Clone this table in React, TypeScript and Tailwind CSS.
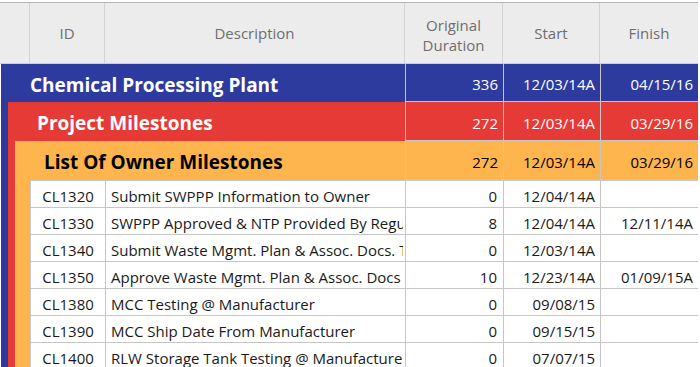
import React from "react";

const FONT = { fontFamily: '"Open Sans", "Noto Sans", sans-serif' };

type Row = { id: string; desc: string; dur: string; start: string; finish: string };

const rows: Row[] = [
  { id: "CL1320", desc: "Submit SWPPP Information to Owner", dur: "0", start: "12/04/14A", finish: "" },
  { id: "CL1330", desc: "SWPPP Approved & NTP Provided By Regulatory Agency", dur: "8", start: "12/04/14A", finish: "12/11/14A" },
  { id: "CL1340", desc: "Submit Waste Mgmt. Plan & Assoc. Docs. To Owner", dur: "0", start: "12/03/14A", finish: "" },
  { id: "CL1350", desc: "Approve Waste Mgmt. Plan & Assoc. Docs", dur: "10", start: "12/23/14A", finish: "01/09/15A" },
  { id: "CL1380", desc: "MCC Testing @ Manufacturer", dur: "0", start: "09/08/15", finish: "" },
  { id: "CL1390", desc: "MCC Ship Date From Manufacturer", dur: "0", start: "09/15/15", finish: "" },
  { id: "CL1400", desc: "RLW Storage Tank Testing @ Manufacturer", dur: "0", start: "07/07/15", finish: "" },
];

function GroupRow({
  name,
  dur,
  start,
  finish,
  h,
  dark,
}: {
  name: string;
  dur: string;
  start: string;
  finish: string;
  h: string;
  dark: boolean;
}) {
  const txt = dark ? "text-white" : "text-black";
  return (
    <div className={`flex ${h}`}>
      <div className={`flex-1 min-w-0 flex items-center pt-[4px] pl-[29px] text-[19px] font-bold whitespace-nowrap overflow-hidden ${txt}`}>
        {name}
      </div>
      <div className={`w-[98px] shrink-0 border-l border-b border-[#c6c6c6] flex items-center justify-end pt-[4px] pr-[5px] text-[15px] ${txt}`}>
        {dur}
      </div>
      <div className={`w-[97px] shrink-0 border-l border-b border-[#c6c6c6] flex items-center justify-end pt-[4px] pr-[5px] text-[15px] ${txt}`}>
        {start}
      </div>
      <div className={`w-[98px] shrink-0 border-l border-b border-[#c6c6c6] flex items-center justify-end pt-[4px] pr-[5px] text-[15px] ${txt}`}>
        {finish}
      </div>
    </div>
  );
}

export default function App() {
  return (
    <div className="w-[700px] h-[367px] overflow-hidden bg-white pt-[2px]" style={FONT}>
      <div className="w-[698px]">
        {/* Header */}
        <div className="flex h-[62px] bg-[#ececec] border-t border-b border-t-[#b4b4b4] border-b-[#cdcdcd] text-[15px] text-[#6e6e6e]">
          <div className="w-[30px] shrink-0 border-r border-[#d2d2d2]" />
          <div className="w-[75px] shrink-0 border-r border-[#d2d2d2] flex items-center justify-center pt-[1px]">ID</div>
          <div className="flex-1 border-r border-[#d2d2d2] flex items-center justify-center pt-[1px]">Description</div>
          <div className="w-[98px] shrink-0 border-r border-[#d2d2d2] flex items-center justify-center text-center leading-[20px] pt-[4px]">
            Original
            <br />
            Duration
          </div>
          <div className="w-[97px] shrink-0 border-r border-[#d2d2d2] flex items-center justify-center pt-[1px]">Start</div>
          <div className="w-[98px] shrink-0 flex items-center justify-center pt-[1px]">Finish</div>
        </div>

        {/* Blue group */}
        <div className="ml-[1px] bg-[#2e3b9e]">
          <GroupRow name="Chemical Processing Plant" dur="336" start="12/03/14A" finish="04/15/16" h="h-[38px]" dark />
          <div className="pl-[7px]">
            <div className="bg-[#e53a36]">
              <GroupRow name="Project Milestones" dur="272" start="12/03/14A" finish="03/29/16" h="h-[39px]" dark />
              <div className="pl-[7px]">
                <div className="bg-[#ffb54d]">
                  <GroupRow name="List Of Owner Milestones" dur="272" start="12/03/14A" finish="03/29/16" h="h-[39px]" dark={false} />
                  <div className="pl-[15px]">
                    <div className="bg-white border-t border-[#c6c6c6] text-[15px] text-[#1a1a1a]">
                      {rows.map((r) => (
                        <div key={r.id} className="flex h-[27px] border-b border-[#c6c6c6]">
                          <div className="w-[76px] shrink-0 border-l border-r border-[#c6c6c6] flex items-center justify-center pt-[4px]">
                            {r.id}
                          </div>
                          <div className="flex-1 min-w-0 flex items-center pl-[5px] pr-[2px] pt-[4px]">
                            <span className="block min-w-0 whitespace-nowrap overflow-hidden">{r.desc}</span>
                          </div>
                          <div className="w-[98px] shrink-0 border-l border-[#c6c6c6] flex items-center justify-end pt-[4px] pr-[6px]">
                            {r.dur}
                          </div>
                          <div className="w-[97px] shrink-0 border-l border-[#c6c6c6] flex items-center justify-end pt-[4px] pr-[5px]">
                            {r.start}
                          </div>
                          <div className="w-[98px] shrink-0 border-l border-[#c6c6c6] flex items-center justify-end pt-[4px] pr-[5px]">
                            {r.finish}
                          </div>
                        </div>
                      ))}
                    </div>
                  </div>
                </div>
              </div>
            </div>
          </div>
        </div>
      </div>
    </div>
  );
}
